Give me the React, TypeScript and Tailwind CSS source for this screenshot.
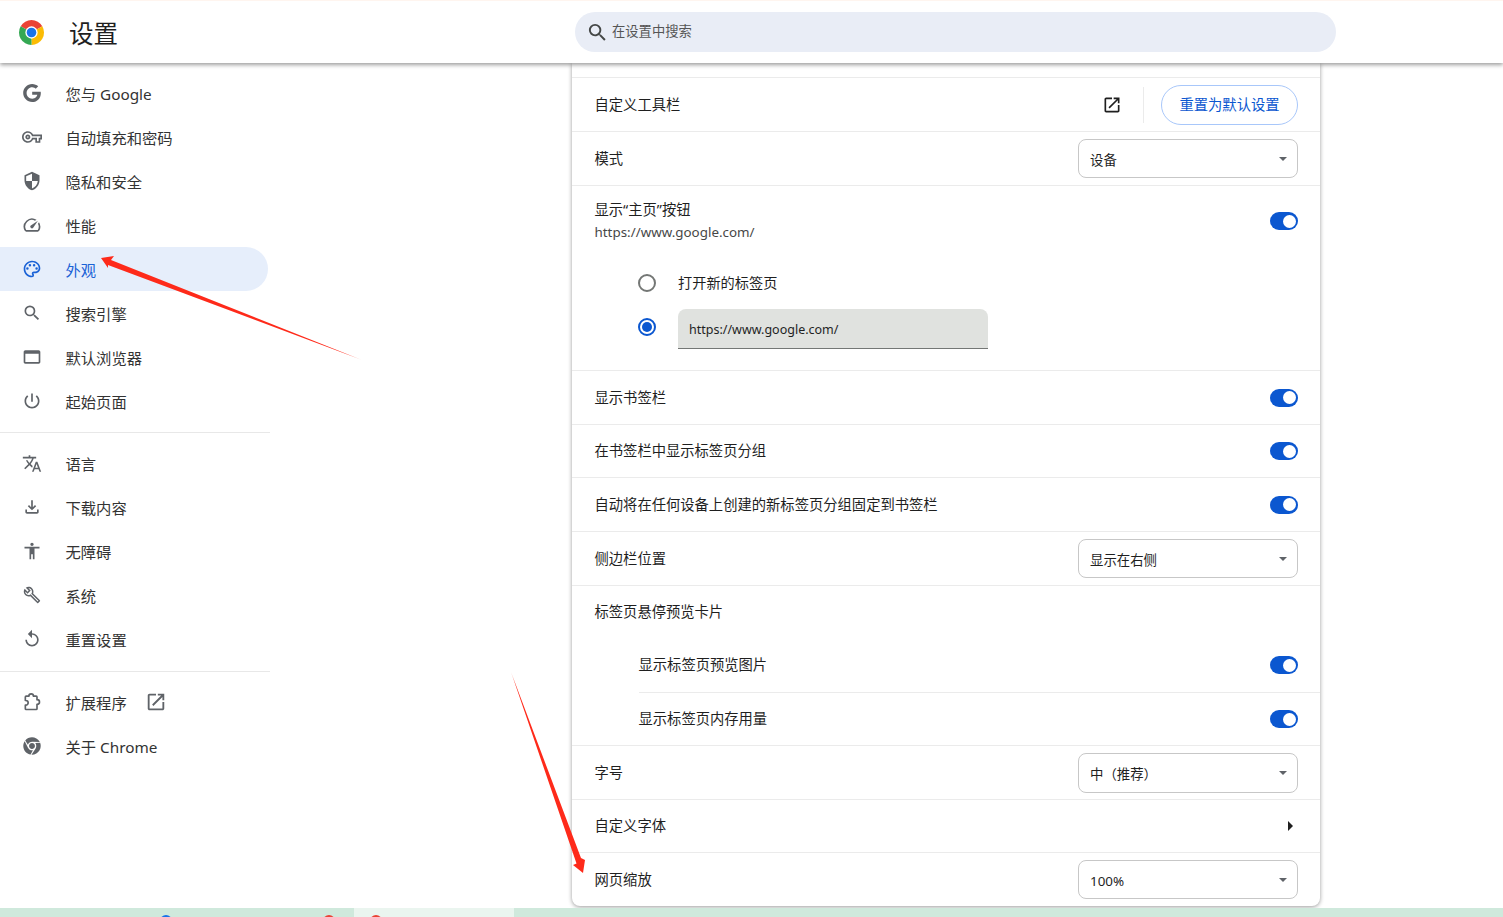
import type { ReactNode } from 'react';
import { FaChrome } from 'react-icons/fa';

const Icon = ({ d, className = 'w-5 h-5' }: { d: string; className?: string }) => (
  <svg viewBox="0 0 24 24" fill="currentColor" className={className}>
    <path d={d} />
  </svg>
);

const icons = {
  google:
    'M12.24 10.285V14.4h6.806c-.275 1.765-2.056 5.174-6.806 5.174-4.095 0-7.439-3.389-7.439-7.574s3.345-7.574 7.439-7.574c2.33 0 3.891.989 4.785 1.849l3.254-3.138C18.189 1.186 15.479 0 12.24 0c-6.635 0-12 5.365-12 12s5.365 12 12 12c6.926 0 11.52-4.869 11.52-11.726 0-.788-.085-1.39-.189-1.989H12.24z',
  key: 'M22 19h-6v-4h-2.68c-1.14 2.42-3.6 4-6.32 4-3.86 0-7-3.14-7-7s3.14-7 7-7c2.72 0 5.17 1.58 6.32 4H24v6h-2v4zm-4-2h2v-4h2v-2H11.94l-.23-.67C11.01 8.34 9.11 7 7 7c-2.76 0-5 2.24-5 5s2.24 5 5 5c2.11 0 4.01-1.34 4.71-3.33l.23-.67H18v4zM7 15c-1.65 0-3-1.35-3-3s1.35-3 3-3 3 1.35 3 3-1.35 3-3 3zm0-4c-.55 0-1 .45-1 1s.45 1 1 1 1-.45 1-1-.45-1-1-1z',
  shield:
    'M12 1L3 5v6c0 5.55 3.84 10.74 9 12 5.16-1.26 9-6.45 9-12V5l-9-4zm0 10.99h7c-.53 4.12-3.28 7.79-7 8.94V12H5V6.3l7-3.11v8.8z',
  speed:
    'M20.38 8.57l-1.23 1.85a8 8 0 0 1-.22 7.58H5.07A8 8 0 0 1 15.58 6.85l1.85-1.23A10 10 0 0 0 3.35 19a2 2 0 0 0 1.72 1h13.85a2 2 0 0 0 1.74-1 10 10 0 0 0-.27-10.44zm-9.79 6.84a2 2 0 0 0 2.83 0l5.66-8.49-8.49 5.66a2 2 0 0 0 0 2.83z',
  palette:
    'M12 22C6.49 22 2 17.51 2 12S6.49 2 12 2s10 4.04 10 9c0 3.31-2.69 6-6 6h-1.77c-.28 0-.5.22-.5.5 0 .12.05.23.13.33.41.47.64 1.06.64 1.67A2.5 2.5 0 0 1 12 22zm0-18c-4.41 0-8 3.59-8 8s3.59 8 8 8c.28 0 .5-.22.5-.5a.54.54 0 0 0-.14-.35c-.41-.46-.63-1.05-.63-1.65 0-1.38 1.12-2.5 2.5-2.5H16c2.21 0 4-1.79 4-4 0-3.86-3.59-7-8-7zM6.5 10a1.5 1.5 0 1 0 0 3 1.5 1.5 0 0 0 0-3zm3-4a1.5 1.5 0 1 0 0 3 1.5 1.5 0 0 0 0-3zm5 0a1.5 1.5 0 1 0 0 3 1.5 1.5 0 0 0 0-3zm3 4a1.5 1.5 0 1 0 0 3 1.5 1.5 0 0 0 0-3z',
  search:
    'M15.5 14h-.79l-.28-.27A6.47 6.47 0 0 0 16 9.5 6.5 6.5 0 1 0 9.5 16c1.61 0 3.09-.59 4.23-1.57l.27.28v.79l5 4.99L20.49 19l-4.99-5zm-6 0C7.01 14 5 11.99 5 9.5S7.01 5 9.5 5 14 7.01 14 9.5 11.99 14 9.5 14z',
  browser:
    'M20 4H4c-1.11 0-2 .9-2 2v12c0 1.1.89 2 2 2h16c1.1 0 2-.9 2-2V6c0-1.1-.89-2-2-2zm0 14H4V8h16v10z',
  power:
    'M13 3h-2v10h2V3zm4.83 2.17l-1.42 1.42C17.99 7.86 19 9.81 19 12c0 3.87-3.13 7-7 7s-7-3.13-7-7c0-2.19 1.01-4.14 2.58-5.42L6.17 5.17C4.23 6.82 3 9.26 3 12c0 4.97 4.03 9 9 9s9-4.03 9-9c0-2.74-1.23-5.18-3.17-6.83z',
  translate:
    'M12.87 15.07l-2.54-2.51.03-.03c1.74-1.94 2.98-4.17 3.71-6.53H17V4h-7V2H8v2H1v1.99h11.17C11.5 7.92 10.44 9.75 9 11.35 8.07 10.32 7.3 9.19 6.69 8h-2c.73 1.63 1.73 3.17 2.98 4.56l-5.09 5.02L4 19l5-5 3.11 3.11.76-2.04zM18.5 10h-2L12 22h2l1.12-3h4.75L21 22h2l-4.5-12zm-2.62 7l1.62-4.33L19.12 17h-3.24z',
  download: 'M18 15v3H6v-3H4v3c0 1.1.9 2 2 2h12c1.1 0 2-.9 2-2v-3h-2zm-1-4l-1.41-1.41L13 12.17V4h-2v8.17L8.41 9.59 7 11l5 5 5-5z',
  access: 'M12 2c1.1 0 2 .9 2 2s-.9 2-2 2-2-.9-2-2 .9-2 2-2zm9 7h-6v13h-2v-6h-2v6H9V9H3V7h18v2z',
  wrench:
    'M22.61 18.99l-9.08-9.08c.93-2.34.45-5.1-1.44-7C9.79.61 6.21.4 3.66 2.26L7.5 6.11 6.08 7.52 2.25 3.69C.39 6.23.6 9.82 2.9 12.11c1.86 1.86 4.57 2.35 6.89 1.48l9.11 9.11c.39.39 1.02.39 1.41 0l2.3-2.3c.4-.38.4-1.01 0-1.41zm-3 1.6l-9.46-9.46c-.61.45-1.29.72-2 .82-1.36.2-2.79-.21-3.83-1.25C3.37 9.76 2.93 8.5 3 7.26l3.09 3.09 4.24-4.24-3.09-3.09c1.24-.07 2.49.37 3.44 1.31 1.08 1.08 1.49 2.57 1.24 3.96-.12.71-.42 1.37-.88 1.96l9.45 9.45-.88.88z',
  reset: 'M12 5V1L7 6l5 5V7c3.31 0 6 2.69 6 6s-2.69 6-6 6-6-2.69-6-6H4c0 4.42 3.58 8 8 8s8-3.58 8-8-3.58-8-8-8z',
  open: 'M19 19H5V5h7V3H5c-1.11 0-2 .9-2 2v14c0 1.1.89 2 2 2h14c1.1 0 2-.9 2-2v-7h-2v7zM14 3v2h3.59l-9.83 9.83 1.41 1.41L19 6.41V10h2V3h-7z',
};

const ChromeLogo = () => (
  <svg viewBox="0 0 24 24" className="w-[25px] h-[25px]">
    <path d="M12 12L1.61 6A12 12 0 0 1 22.39 6Z" fill="#ea4335" />
    <path d="M12 12L22.39 6A12 12 0 0 1 12 24Z" fill="#fbbc04" />
    <path d="M12 12L12 24A12 12 0 0 1 1.61 6Z" fill="#34a853" />
    <circle cx="12" cy="12" r="5.9" fill="#fff" />
    <circle cx="12" cy="12" r="4.6" fill="#1a73e8" />
  </svg>
);

const ExtensionIcon = () => (
  <svg viewBox="0 0 24 24" fill="none" stroke="currentColor" strokeWidth="2" strokeLinejoin="round" className="w-5 h-5">
    <path d="M5 5h3.2a2.8 2.8 0 0 1 5.6 0H17a1 1 0 0 1 1 1v3.2h.2a2.8 2.8 0 0 1 0 5.6H18V20a1 1 0 0 1-1 1H5a1 1 0 0 1-1-1v-4.2h.6a2.8 2.8 0 0 0 0-5.6H4V6a1 1 0 0 1 1-1z" />
  </svg>
);

const SideItem = ({ icon, label, active, after }: { icon: ReactNode; label: string; active?: boolean; after?: ReactNode }) => (
  <div
    className={`h-11 flex items-center pl-[22px] w-[268px] rounded-r-full ${
      active ? 'bg-[#e6eefb] text-[#1a62d6]' : 'text-[#5f6368]'
    }`}
  >
    <span className="w-5 h-5 mr-[23.5px] flex items-center justify-center shrink-0">{icon}</span>
    <span className={`text-[15.3px] pt-[3px] ${active ? 'text-[#1a62d6]' : 'text-[#333]'}`}>{label}</span>
    {after}
  </div>
);

const Switch = () => (
  <div className="w-7 h-[18px] rounded-full bg-[#0b57d0] flex items-center justify-end pr-[2px] shrink-0">
    <div className="w-[13px] h-[13px] rounded-full bg-white" />
  </div>
);

const Select = ({ value, tall }: { value: string; tall?: boolean }) => (
  <div
    className={`w-[220px] ${tall ? 'h-10' : 'h-[39px]'} border border-[#c7c7c7] rounded-lg flex items-center justify-between pl-[11px] pr-[10px] text-[13.4px] text-[#1f1f1f] shrink-0`}
  >
    <span className="pt-[3px]">{value}</span>
    <span className="w-0 h-0 border-x-[4px] border-x-transparent border-t-[4px] border-t-[#5f6368]" />
  </div>
);

const Row = ({ height, label, children }: { height: string; label: string; children?: ReactNode }) => (
  <div className={`${height} border-t border-[#ebebeb] flex items-center justify-between pl-[22.5px] pr-[22px]`}>
    <span className="text-[14.3px] text-[#1f1f1f]">{label}</span>
    {children}
  </div>
);

export default function App() {
  return (
    <div className="relative h-[917px] overflow-hidden bg-white flex flex-col font-['Noto_Sans','Noto_Sans_CJK_SC',sans-serif]">
      <header className="relative z-10 h-[63px] shrink-0 bg-white border-t border-[#fff5ef] shadow-[0_2px_4px_rgba(0,0,0,0.38)] flex items-center">
        <div className="w-[575px] flex items-center pl-[19px] shrink-0">
          <ChromeLogo />
          <span className="ml-[25px] mt-[5px] text-[24.5px] text-[#1f1f1f]">设置</span>
        </div>
        <div className="w-[761px] h-10 rounded-full bg-[#e9edf6] flex items-center pl-[11px] text-[#444746]">
          <Icon d={icons.search} className="w-[23px] h-[23px]" />
          <span className="ml-[3px] text-[13.3px] text-[#555]">在设置中搜索</span>
        </div>
      </header>

      <div className="flex flex-1 min-h-0">
        <nav className="w-[270px] shrink-0 pt-2">
          <SideItem icon={<Icon d={icons.google} className="w-[18px] h-[18px]" />} label="您与 Google" />
          <SideItem icon={<Icon d={icons.key} />} label="自动填充和密码" />
          <SideItem icon={<Icon d={icons.shield} />} label="隐私和安全" />
          <SideItem icon={<Icon d={icons.speed} />} label="性能" />
          <SideItem icon={<Icon d={icons.palette} />} label="外观" active />
          <SideItem icon={<Icon d={icons.search} />} label="搜索引擎" />
          <SideItem icon={<Icon d={icons.browser} />} label="默认浏览器" />
          <SideItem icon={<Icon d={icons.power} />} label="起始页面" />
          <div className="mt-[9px] mb-2 border-t border-[#e8e8e8]" />
          <SideItem icon={<Icon d={icons.translate} className="w-[23px] h-[23px]" />} label="语言" />
          <SideItem icon={<Icon d={icons.download} />} label="下载内容" />
          <SideItem icon={<Icon d={icons.access} />} label="无障碍" />
          <SideItem icon={<Icon d={icons.wrench} className="w-[18px] h-[18px]" />} label="系统" />
          <SideItem icon={<Icon d={icons.reset} />} label="重置设置" />
          <div className="mt-[10px] mb-2 border-t border-[#e8e8e8]" />
          <SideItem
            icon={<ExtensionIcon />}
            label="扩展程序"
            after={<span className="ml-[18px] flex"><Icon d={icons.open} className="w-[22px] h-[22px]" /></span>}
          />
          <SideItem
            icon={<FaChrome className="w-[18px] h-[18px]" />}
            label="关于 Chrome"
          />
        </nav>

        <main className="flex-1 min-w-0 pl-[302px]">
          <section className="w-[748px] h-[843px] bg-white rounded-b-lg shadow-[0_1px_4px_rgba(0,0,0,0.4)] pt-[14px]">
            <Row height="h-[54px]" label="自定义工具栏">
              <div className="flex items-center">
                <Icon d={icons.open} className="w-5 h-5 text-[#1f1f1f]" />
                <div className="w-px h-9 bg-[#ebebeb] ml-[21px] mr-[17px]" />
                <div className="w-[137px] h-10 rounded-full border border-[#a8c7fa] flex items-center justify-center text-[14.3px] text-[#0b57d0]">
                  重置为默认设置
                </div>
              </div>
            </Row>
            <Row height="h-[54px]" label="模式">
              <Select value="设备" />
            </Row>

            <div className="h-[185px] border-t border-[#ebebeb] pl-[22.5px] pr-[22px] pt-[14px]">
              <div className="flex justify-between">
                <div>
                  <div className="text-[14.3px] text-[#1f1f1f] leading-5">显示“主页”按钮</div>
                  <div className="text-[13.4px] text-[#474747] leading-5 mt-[2px]">https://www.google.com/</div>
                </div>
                <div className="pt-[12px]"><Switch /></div>
              </div>
              <div className="ml-[43.5px] mt-[31px] flex items-center h-5">
                <div className="w-[18px] h-[18px] rounded-full border-2 border-[#747775]" />
                <span className="ml-[22px] text-[14.2px] text-[#1f1f1f]">打开新的标签页</span>
              </div>
              <div className="ml-[43.5px] mt-4 flex items-start">
                <div className="w-[18px] h-[18px] mt-[9px] rounded-full border-2 border-[#0b57d0] flex items-center justify-center">
                  <div className="w-[10px] h-[10px] rounded-full bg-[#0b57d0]" />
                </div>
                <div className="ml-[22px] w-[310px] h-10 bg-[#e0e2df] rounded-t-lg border-b border-[#747775] flex items-center pl-[11px] pt-[3px] text-[12.5px] text-[#1f1f1f]">
                  https://www.google.com/
                </div>
              </div>
            </div>

            <Row height="h-[54px]" label="显示书签栏"><Switch /></Row>
            <Row height="h-[53px]" label="在书签栏中显示标签页分组"><Switch /></Row>
            <Row height="h-[54px]" label="自动将在任何设备上创建的新标签页分组固定到书签栏"><Switch /></Row>
            <Row height="h-[54px]" label="侧边栏位置"><Select value="显示在右侧" /></Row>
            <Row height="h-[53px]" label="标签页悬停预览卡片" />
            <div className="pl-[66.5px]">
              <div className="h-[54px] flex items-center justify-between pr-[22px]">
                <span className="text-[14.3px] text-[#1f1f1f]">显示标签页预览图片</span>
                <Switch />
              </div>
              <div className="h-[53px] border-t border-[#ebebeb] flex items-center justify-between pr-[22px]">
                <span className="text-[14.3px] text-[#1f1f1f]">显示标签页内存用量</span>
                <Switch />
              </div>
            </div>
            <Row height="h-[54px]" label="字号"><Select value="中（推荐）" tall /></Row>
            <Row height="h-[53px]" label="自定义字体">
              <span className="mr-[5px] w-0 h-0 border-y-[5px] border-y-transparent border-l-[5px] border-l-[#1f1f1f]" />
            </Row>
            <Row height="h-[54px]" label="网页缩放"><Select value="100%" /></Row>
          </section>
        </main>
      </div>

      <footer className="h-[9px] shrink-0 bg-[#cfe9dc] flex">
        <div className="relative w-[354px] h-full">
          <div className="absolute left-[160px] top-[7px] w-3 h-3 rounded-full bg-[#1a73e8]" />
          <div className="absolute left-[323px] top-[7px] w-3 h-3 rounded-full bg-[#ea4335]" />
        </div>
        <div className="relative w-[160px] h-full bg-[#eaf5ef]">
          <div className="absolute left-[16px] top-[7px] w-3 h-3 rounded-full bg-[#ea4335]" />
        </div>
      </footer>

      {/* annotation arrows drawn over the screenshot */}
      <svg className="absolute inset-0 z-20 pointer-events-none" width="1503" height="917" viewBox="0 0 1503 917">
        <defs>
          <linearGradient id="fade1" gradientUnits="userSpaceOnUse" x1="102" y1="257" x2="362" y2="360">
            <stop offset="0.94" stopColor="#fe2a1a" />
            <stop offset="1" stopColor="#fe2a1a" stopOpacity="0.4" />
          </linearGradient>
          <linearGradient id="fade2" gradientUnits="userSpaceOnUse" x1="584" y1="873" x2="511" y2="672">
            <stop offset="0.94" stopColor="#fe2a1a" />
            <stop offset="1" stopColor="#fe2a1a" stopOpacity="0.4" />
          </linearGradient>
        </defs>
        <polygon points="101,258 114,256 111,260 362,360 108,265 108,268" fill="url(#fade1)" />
        <polygon points="511,672 581,858 585,860 583,873 573,865 576.5,863.5" fill="url(#fade2)" />
      </svg>
    </div>
  );
}
